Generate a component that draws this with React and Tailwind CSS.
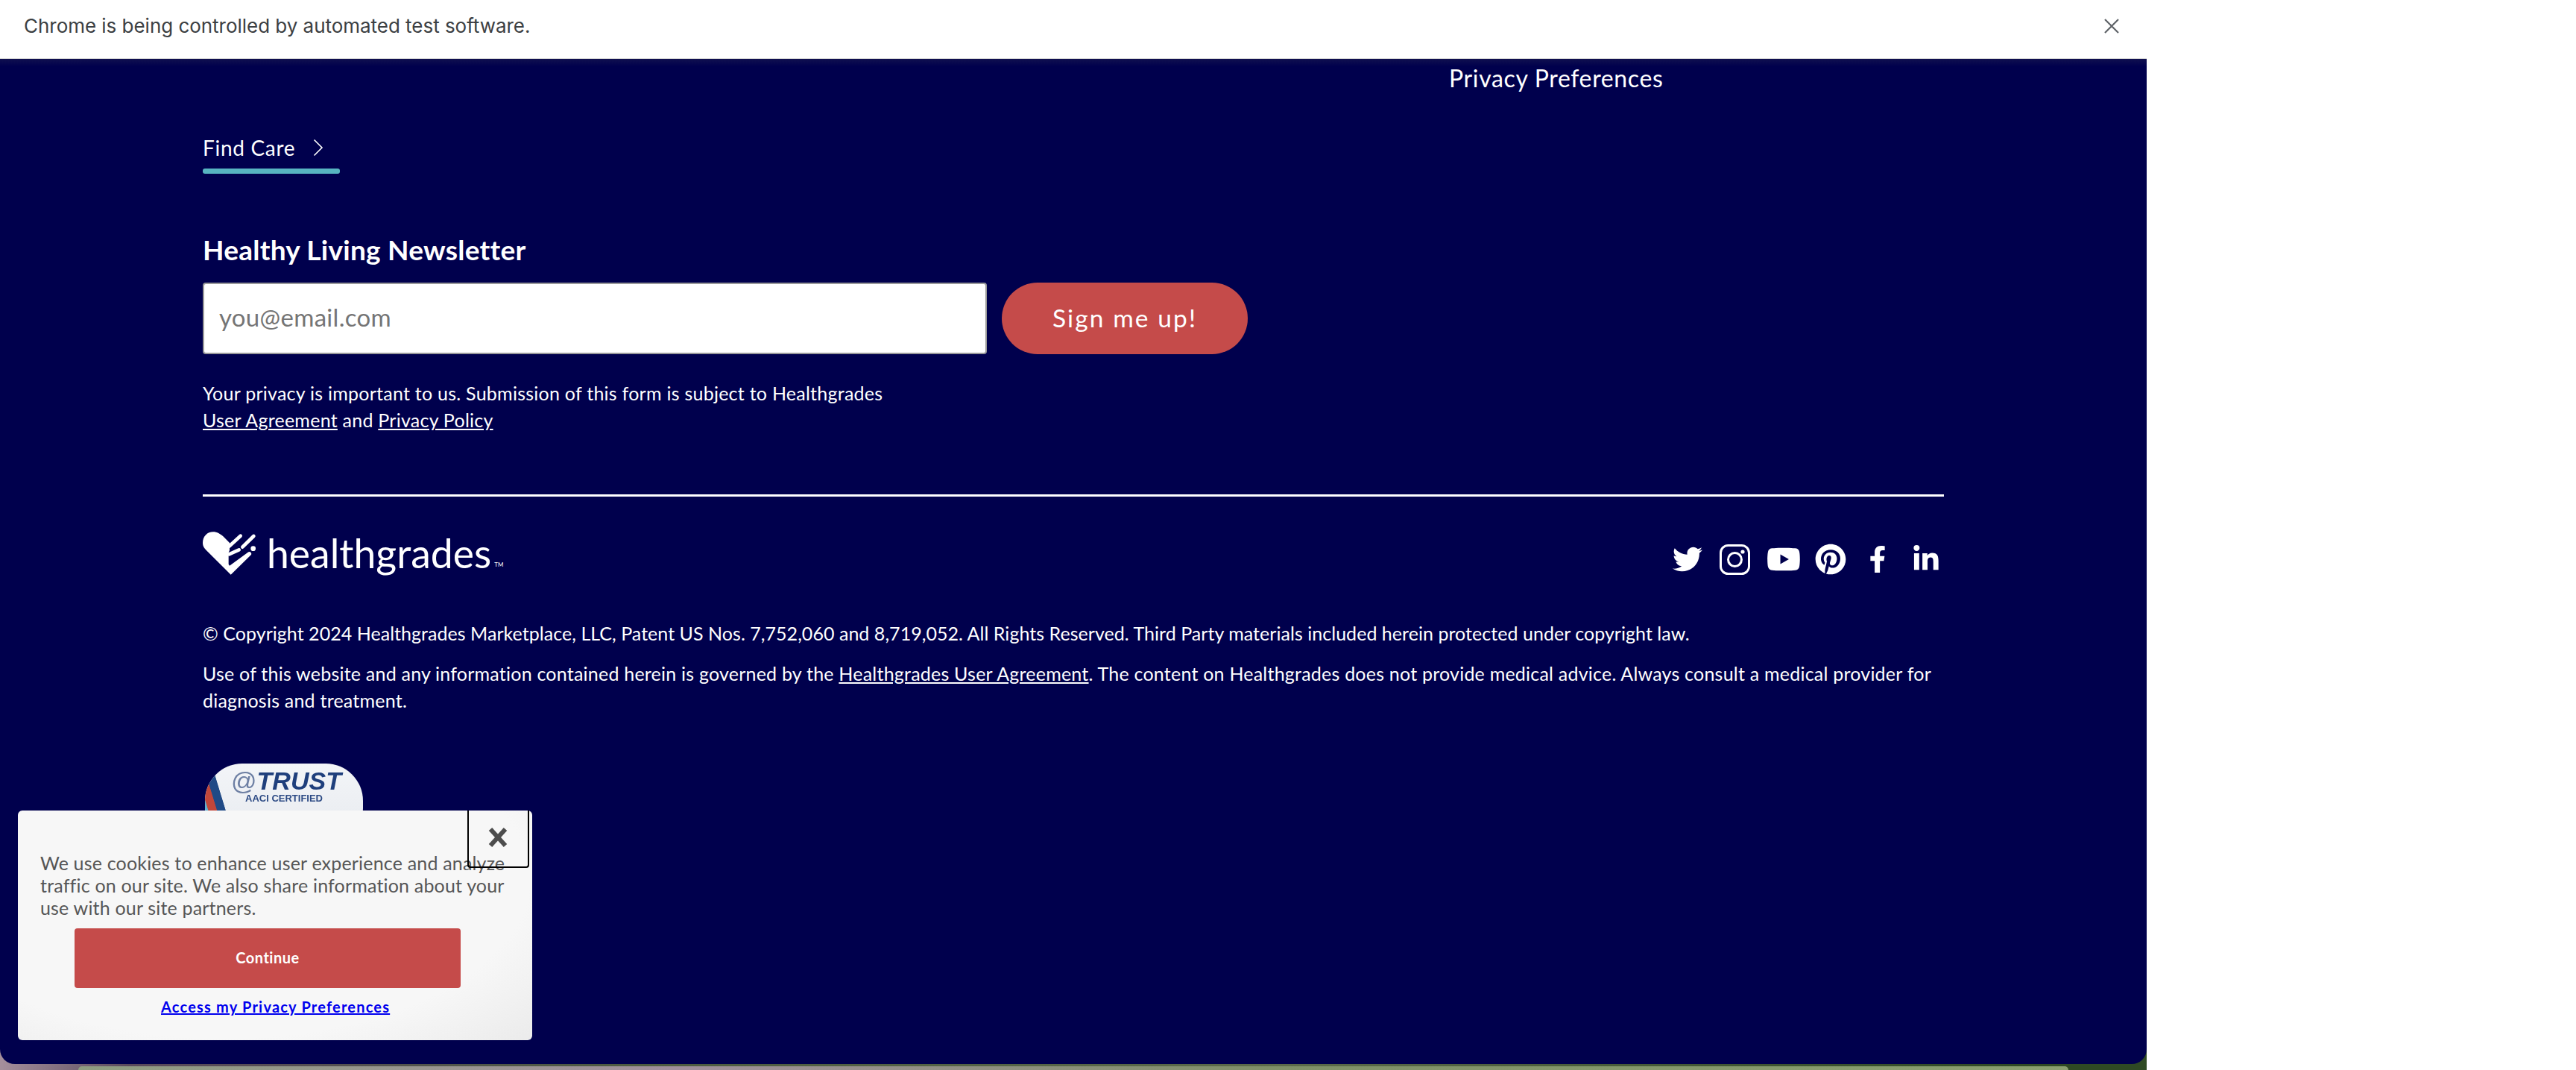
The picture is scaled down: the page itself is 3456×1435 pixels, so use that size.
import React from "react";
import { FaTwitter, FaYoutube, FaPinterest, FaFacebookF, FaLinkedinIn } from "react-icons/fa";

function Heart() {
  return (
    <svg width="72" height="59" viewBox="30 39 216 177" fill="#fff" className="shrink-0">
      <path d="M143 212 L45 115 C35 105 30 96 30 85 C30 58 48 40 72 40 C88 40 100 48 112 58 L138 84 L138 114 L134 124 L134 170 L138 176 L212 122 C220 116 230 126 224 133 Z" />
      <g stroke="#fff" strokeWidth="14" strokeLinecap="round" fill="none">
        <path d="M136 98 L182 56" />
        <path d="M190 101 L235 57" />
        <path d="M136 130 L176 112" />
      </g>
      <circle cx="233" cy="107" r="10" />
    </svg>
  );
}

function Instagram() {
  return (
    <svg width="41" height="41" viewBox="0 0 41 41" fill="none" stroke="#fff" strokeWidth="3">
      <rect x="1.5" y="1.5" width="38" height="38" rx="10" />
      <circle cx="20.5" cy="20.5" r="9" />
      <circle cx="31" cy="10" r="2.6" fill="#fff" stroke="none" />
    </svg>
  );
}

export default function App() {
  return (
    <div className="flex h-[1435px] w-full overflow-hidden bg-white font-['Lato',sans-serif] text-white">
      <div className="flex w-[2880px] shrink-0 flex-col">
        <div className="flex h-[79px] shrink-0 items-center justify-between border-b border-[#d8d8d8] bg-white pl-8 pr-[37px] pb-[9px] font-['Inter',sans-serif] text-[26px] text-[#3c4043]">
          <span className="tracking-[-0.03px]">Chrome is being controlled by automated test software.</span>
          <svg width="20" height="20" viewBox="0 0 20 20" stroke="#5f6368" strokeWidth="2.2" fill="none">
            <path d="M1 1 L19 19 M19 1 L1 19" />
          </svg>
        </div>

        <div className="flex min-h-0 flex-1 flex-col bg-[linear-gradient(90deg,#a58f9c_0%,#5a4a5c_6%,#4d5c40_30%,#5c6b4a_60%,#2f4a24_95%)]">
          <div className="relative h-[1348px] shrink-0 overflow-hidden rounded-b-[20px] bg-[linear-gradient(180deg,#10104f_0px,#00004d_10px)] pl-[272px] pr-[272px]">
            <div className="flex h-[46px] items-end pl-[1672px] text-[32px] leading-[40px] tracking-[0.65px]">Privacy Preferences</div>

            <div className="mt-[52px] flex w-[184px] flex-col">
              <div className="flex h-[44px] items-center pb-[2px] text-[28px] leading-[34px] tracking-[0.7px]">
                <span>Find Care</span>
                <svg width="14" height="24" viewBox="0 0 14 24" fill="none" stroke="#fff" strokeWidth="1.6" className="ml-[24px]">
                  <path d="M1.5 1.5 L12 12 L1.5 22.5" />
                </svg>
              </div>
              <div className="mt-[5px] h-[7px] rounded-[3px] bg-[#57b4c1]"></div>
            </div>

            <div className="mt-[80px] text-[37px] font-bold leading-[44px] tracking-[0.25px]">Healthy Living Newsletter</div>

            <div className="mt-[22px] flex gap-[20px]">
              <div className="flex h-[96px] w-[1052px] items-center rounded-[4px] border-2 border-[#999999] bg-white pb-[2px] pl-[20px] text-[33px] tracking-[0.3px] text-[#757575]">you@email.com</div>
              <div className="flex h-[96px] w-[330px] items-center justify-center rounded-[48px] bg-[#c54b4a] pb-[2px] text-[33.5px] tracking-[2.1px]">Sign me up!</div>
            </div>

            <div className="mt-[34px] text-[25px] leading-[36px] tracking-[0.25px]">
              <div>Your privacy is important to us. Submission of this form is subject to Healthgrades</div>
              <div><span className="underline">User Agreement</span> and <span className="underline">Privacy Policy</span></div>
            </div>

            <div className="mt-[82px] h-[3px] bg-white"></div>

            <div className="mt-[47px] flex h-[60px] items-start justify-between pr-[5px]">
              <div className="flex items-start">
                <Heart />
                <span className="ml-[14px] mt-[-2px] text-[53.5px] leading-[60px]">healthgrades</span>
                <span className="ml-[4px] mt-[39px] text-[8px] leading-[10px]">TM</span>
              </div>
              <div className="mt-[14px] flex items-center">
                <FaTwitter size={40} />
                <span className="ml-[23px]"><Instagram /></span>
                <FaYoutube size={46} className="ml-[22px]" />
                <FaPinterest size={42} className="ml-[19px]" />
                <FaFacebookF size={36} className="ml-[24px]" />
                <FaLinkedinIn size={38} className="ml-[28px]" />
              </div>
            </div>

            <div className="mt-[58px] text-[25px] leading-[36px] tracking-[0.04px]">© Copyright 2024 Healthgrades Marketplace, LLC, Patent US Nos. 7,752,060 and 8,719,052. All Rights Reserved. Third Party materials included herein protected under copyright law.</div>
            <div className="mt-[18px] text-[25px] leading-[36px] tracking-[0.22px]">Use of this website and any information contained herein is governed by the <span className="underline">Healthgrades User Agreement</span>. The content on Healthgrades does not provide medical advice. Always consult a medical provider for diagnosis and treatment.</div>

            <div className="relative ml-[3px] mt-[67px] h-[110px] w-[212px] overflow-hidden rounded-[50px] bg-[linear-gradient(180deg,#f3f5f8,#e6e9ee)] blur-[0.7px]">
              <div className="absolute left-0 top-0 h-full w-[50px] bg-[linear-gradient(73deg,#5fb1d1_0%,#5fb1d1_22%,#c1463a_23%,#c1463a_36%,#204a86_37%,#204a86_50%,transparent_51%)]"></div>
              <div className="flex justify-center pl-[6px] pt-[6px] font-['Liberation_Sans',sans-serif] leading-none text-[#1f3f7c]">
                <span className="text-[34px] text-[#6d7fa3]">@</span>
                <span className="text-[34px] font-bold italic">TRUST</span>
              </div>
              <div className="pl-[54px] font-['Liberation_Sans',sans-serif] text-[13px] font-bold leading-[14px] text-[#2c4a84]">AACI CERTIFIED</div>
            </div>

            <div className="absolute left-[24px] top-[1008px] h-[308px] w-[690px] rounded-[6px] bg-[radial-gradient(ellipse_at_40%_30%,#f7f7f7_70%,#ebebeb_100%)] text-[#565656]">
              <div className="absolute right-[4px] top-0 flex h-[77px] w-[83px] items-center justify-center rounded-b-[4px] border-2 border-t-0 border-black pr-[2px] pb-[4px]">
                <svg width="26" height="26" viewBox="0 0 26 26" stroke="#4d4d4d" strokeWidth="6" fill="none">
                  <path d="M3 2 L23 24 M23 2 L3 24" />
                </svg>
              </div>
              <div className="pl-[30px] pr-[20px] pt-[55px] text-[25px] leading-[30px] tracking-[0.18px]">We use cookies to enhance user experience and analyze traffic on our site. We also share information about your use with our site partners.</div>
              <div className="ml-[76px] mt-[13px] flex h-[80px] w-[518px] items-center justify-center rounded-[4px] bg-[#c54b4a] pb-[2px] text-[20px] font-bold tracking-[0.5px] text-white">Continue</div>
              <div className="mt-[15px] pl-[192px] text-[20px] font-bold leading-[20px] tracking-[1.2px] text-[#0000ee] underline">Access my Privacy Preferences</div>
            </div>
          </div>
          <div className="mx-[105px] mt-[3px] min-h-0 flex-1 rounded-t-[14px] bg-[linear-gradient(90deg,#8e9d80_0%,#a08f9c_30%,#7f9068_60%,#8aa070_100%)]"></div>
        </div>
      </div>
      <div className="flex-1 bg-white"></div>
    </div>
  );
}
